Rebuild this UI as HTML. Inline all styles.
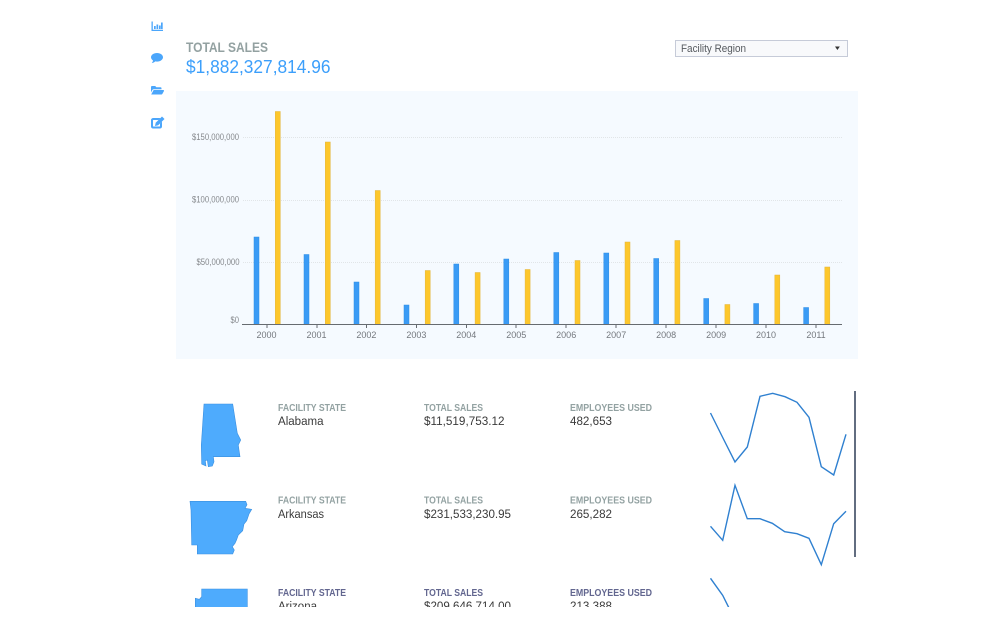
<!DOCTYPE html>
<html lang="en">
<head>
<meta charset="utf-8">
<title>Total Sales</title>
<style>
html,body{margin:0;padding:0;background:#fff;width:999px;height:618px;overflow:hidden}
svg{display:block}
text{font-family:"Liberation Sans",sans-serif}
.lab{font-size:9.800px;font-weight:bold;fill:#93a2a2}
.lab3{font-size:9.800px;font-weight:bold;fill:#62668f}
.val{font-size:12.200px;fill:#3a3a3a}
.yl{font-size:8.800px;fill:#85888c}
.xl{font-size:9px;fill:#74787e}
.b{fill:#3a9bf5;stroke:#2f8ee6;stroke-width:.5}
.y{fill:#fdc72c;stroke:#e3b43a;stroke-width:.5}
.grid{stroke:#e1e5e8;stroke-width:1;stroke-dasharray:1 1}
.spark{fill:none;stroke:#2f80d0;stroke-width:1.4}
.st{fill:#4eabfd;stroke:#3a8fe0;stroke-width:.6}
</style>
</head>
<body>
<svg width="999" height="618" viewBox="0 0 999 618" xmlns="http://www.w3.org/2000/svg">
<defs><clipPath id="c"><rect x="0" y="0" width="999" height="607"/></clipPath></defs>

<!-- side icons -->
<g fill="#4ba6fb">
<path d="M151.500 21.500h1.300v8.200h10.200v1.300h-11.500z"/>
<rect x="154" y="26" width="1.700" height="3"/><rect x="156.500" y="24.500" width="1.700" height="4.500"/><rect x="159" y="25.500" width="1.700" height="3.500"/><rect x="161" y="22.500" width="1.700" height="6.500"/>
<path d="M157 53c3.400 0 6 1.900 6 4.300s-2.600 4.300-6 4.300c-.6 0-1.200 0-1.700-.2-.9.900-2.200 1.500-3.600 1.700.7-.8 1.200-1.700 1.300-2.600-1.200-.8-2-1.900-2-3.200 0-2.400 2.600-4.300 6-4.300z"/>
<path d="M151 87c0-.6.400-1 1-1h3.200l1.200 1.300h4.100c.6 0 1 .4 1 1v.9h-7.700c-.7 0-1.300.4-1.600 1l-1.200 2.300z"/>
<path d="M154 90h9.300c.5 0 .9.500.7 1l-1.700 3c-.2.300-.5.500-.9.500h-10.200l2-3.800c.2-.4.500-.7.800-.7z"/>
<path d="M153.500 118h7l-2 2h-5c-.3 0-.5.200-.5.500v5.500c0 .3.200.5.500.5h6c.3 0 .5-.2.500-.5v-2.500l2-2v5c0 1.100-.9 2-2 2h-7c-1.100 0-2-.9-2-2v-6.500c0-1.100.9-2 2.500-2z"/>
<path d="M162 116.500l2.500 2.500-6.300 6.300-3.200.7.700-3.200z"/>
</g>

<!-- heading -->
<text x="186" y="52" font-size="14" font-weight="bold" fill="#93a1a1" textLength="82" lengthAdjust="spacingAndGlyphs">TOTAL SALES</text>
<text x="186" y="73" font-size="18.500" fill="#3c9ffb" textLength="144.500" lengthAdjust="spacingAndGlyphs">$1,882,327,814.96</text>

<!-- select -->
<rect x="675.500" y="40.500" width="172" height="16" fill="#f8f9fb" stroke="#c6cbd8"/>
<text x="681" y="52" font-size="10.800" fill="#55595e" textLength="65" lengthAdjust="spacingAndGlyphs">Facility Region</text>
<path d="M835 46.500h4.800l-2.400 3.500z" fill="#333"/>

<!-- chart -->
<rect x="176" y="91" width="682" height="268" fill="#f5faff"/>
<line class="grid" x1="243" y1="137.500" x2="842" y2="137.500"/>
<line class="grid" x1="243" y1="200.500" x2="842" y2="200.500"/>
<line class="grid" x1="243" y1="262.500" x2="842" y2="262.500"/>
<text class="yl" x="192" y="140" textLength="47" lengthAdjust="spacingAndGlyphs">$150,000,000</text>
<text class="yl" x="192" y="202.500" textLength="47" lengthAdjust="spacingAndGlyphs">$100,000,000</text>
<text class="yl" x="196.500" y="265" textLength="43" lengthAdjust="spacingAndGlyphs">$50,000,000</text>
<text class="yl" x="230.500" y="323" textLength="8.500" lengthAdjust="spacingAndGlyphs">$0</text>

<g>
<rect class="b" x="254" y="237" width="5" height="87.500"/><rect class="y" x="275.300" y="111.500" width="5" height="213"/>
<rect class="b" x="304" y="254.500" width="5" height="70"/><rect class="y" x="325.300" y="142" width="5" height="182.500"/>
<rect class="b" x="354" y="282" width="5" height="42.500"/><rect class="y" x="375.200" y="190.500" width="5" height="134"/>
<rect class="b" x="404" y="305" width="5" height="19.500"/><rect class="y" x="425.200" y="270.500" width="5" height="54"/>
<rect class="b" x="453.800" y="264" width="5" height="60.500"/><rect class="y" x="475.100" y="272.500" width="5" height="52"/>
<rect class="b" x="503.800" y="259" width="5" height="65.500"/><rect class="y" x="525.100" y="269.500" width="5" height="55"/>
<rect class="b" x="553.800" y="252.500" width="5" height="72"/><rect class="y" x="575" y="260.500" width="5" height="64"/>
<rect class="b" x="603.800" y="253" width="5" height="71.500"/><rect class="y" x="625" y="242" width="5" height="82.500"/>
<rect class="b" x="653.700" y="258.500" width="5" height="66"/><rect class="y" x="674.900" y="240.500" width="5" height="84"/>
<rect class="b" x="703.700" y="298.500" width="5" height="26"/><rect class="y" x="724.900" y="304.500" width="5" height="20"/>
<rect class="b" x="753.600" y="303.500" width="5" height="21"/><rect class="y" x="774.800" y="275" width="5" height="49.500"/>
<rect class="b" x="803.600" y="307.500" width="5" height="17"/><rect class="y" x="824.800" y="267" width="5" height="57.500"/>
</g>
<line x1="242" y1="324.500" x2="842" y2="324.500" stroke="#666b70" stroke-width="1"/>
<path stroke="#666b70" stroke-width="1" d="M267 325v3M317 325v3M366.500 325v3M416.500 325v3M466.500 325v3M516 325v3M566 325v3M616 325v3M666 325v3M716 325v3M766 325v3M816 325v3"/>
<g text-anchor="middle">
<text class="xl" x="266.500" y="338">2000</text>
<text class="xl" x="316.500" y="338">2001</text>
<text class="xl" x="366.400" y="338">2002</text>
<text class="xl" x="416.400" y="338">2003</text>
<text class="xl" x="466.300" y="338">2004</text>
<text class="xl" x="516.300" y="338">2005</text>
<text class="xl" x="566.200" y="338">2006</text>
<text class="xl" x="616.200" y="338">2007</text>
<text class="xl" x="666.100" y="338">2008</text>
<text class="xl" x="716.100" y="338">2009</text>
<text class="xl" x="766" y="338">2010</text>
<text class="xl" x="816" y="338">2011</text>
</g>

<g clip-path="url(#c)">
<!-- row 1 -->
<path class="st" d="M204 404H232.700L237.300 433.300 240.700 440 238.300 445 239 450 240 456.700H213.300L214 461.700 212.300 466 208.300 466.700 207.300 460 205.300 460.700 206 466 201.700 464 201.300 445z"/>
<text class="lab" x="278" y="411" textLength="68" lengthAdjust="spacingAndGlyphs">FACILITY STATE</text>
<text class="val" x="278" y="425" textLength="45.500" lengthAdjust="spacingAndGlyphs">Alabama</text>
<text class="lab" x="424" y="411" textLength="59" lengthAdjust="spacingAndGlyphs">TOTAL SALES</text>
<text class="val" x="424" y="425" textLength="80.500" lengthAdjust="spacingAndGlyphs">$11,519,753.12</text>
<text class="lab" x="570" y="411" textLength="82" lengthAdjust="spacingAndGlyphs">EMPLOYEES USED</text>
<text class="val" x="570" y="425" textLength="42" lengthAdjust="spacingAndGlyphs">482,653</text>
<polyline class="spark" points="710.500,413 722.700,437.500 735,462 747.300,447 760,396.300 772.700,393.300 785,396.700 797,402.300 809,417.300 821.300,466.700 833.700,475 846,434.300"/>

<!-- row 2 -->
<path class="st" d="M190 501.300H245.700L247 504.700 245 508.300 251.700 509.300 249 514 246.700 520.700 244 524 242.700 530.700 238.300 535 236.500 540 235 543.300 232.300 546.700 234.300 550 232.700 554H197.300V545H191.700L191 510z"/>
<text class="lab" x="278" y="503.500" textLength="68" lengthAdjust="spacingAndGlyphs">FACILITY STATE</text>
<text class="val" x="278" y="518" textLength="46" lengthAdjust="spacingAndGlyphs">Arkansas</text>
<text class="lab" x="424" y="503.500" textLength="59" lengthAdjust="spacingAndGlyphs">TOTAL SALES</text>
<text class="val" x="424" y="518" textLength="87" lengthAdjust="spacingAndGlyphs">$231,533,230.95</text>
<text class="lab" x="570" y="503.500" textLength="82" lengthAdjust="spacingAndGlyphs">EMPLOYEES USED</text>
<text class="val" x="570" y="518" textLength="42" lengthAdjust="spacingAndGlyphs">265,282</text>
<polyline class="spark" points="710.500,526.300 722.700,540.300 735,485.300 747.300,518.700 760,518.700 772.300,523.300 784.700,531.700 797,533.700 809,538.300 821.300,564.700 833.700,523.700 846,511.300"/>

<!-- row 3 -->
<path class="st" d="M201.700 589H247.300V620H195.300V598.300L199.300 599.300 201.700 596.700z"/>
<text class="lab3" x="278" y="596" textLength="68" lengthAdjust="spacingAndGlyphs">FACILITY STATE</text>
<text class="val" x="278" y="610" textLength="39" lengthAdjust="spacingAndGlyphs">Arizona</text>
<text class="lab3" x="424" y="596" textLength="59" lengthAdjust="spacingAndGlyphs">TOTAL SALES</text>
<text class="val" x="424" y="610" textLength="87" lengthAdjust="spacingAndGlyphs">$209,646,714.00</text>
<text class="lab3" x="570" y="596" textLength="82" lengthAdjust="spacingAndGlyphs">EMPLOYEES USED</text>
<text class="val" x="570" y="610" textLength="42" lengthAdjust="spacingAndGlyphs">213,388</text>
<polyline class="spark" points="710.500,578.300 722.700,595.300 730,610"/>
</g>

<!-- scrollbar -->
<rect x="854" y="391" width="2" height="166" fill="#626d80"/>
</svg>
</body>
</html>
